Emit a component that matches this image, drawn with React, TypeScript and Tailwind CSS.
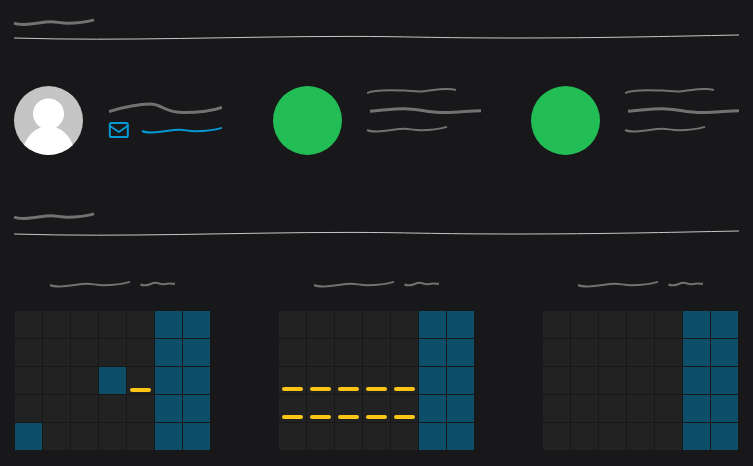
type CellKind = "day" | "off";

const ROWS = [0, 1, 2, 3, 4];
const COLUMNS = [0, 1, 2, 3, 4, 5, 6];

type MonthData = { off: string[]; marked: string[]; markClass: string };

const MONTHS: MonthData[] = [
  { off: ["2-3", "4-0"], marked: ["2-4"], markClass: "pb-[2px]" },
  {
    off: [],
    marked: ["2-0", "2-1", "2-2", "2-3", "2-4", "3-0", "3-1", "3-2", "3-3", "3-4"],
    markClass: "pb-[3px]",
  },
  { off: [], marked: [], markClass: "pb-[3px]" },
];

function Scribble({ width = 2 }: { width?: number }) {
  return (
    <svg className="block h-2 w-20 overflow-visible" viewBox="0 0 80 8" fill="none" stroke="currentColor" strokeWidth={width}>
      <path d="M0 5C3 6.4 8 6.7 14 6.3C22 5.7 30 3.7 37 3.7C43 3.7 46 5.2 54 5.2C64 5.2 73 3.8 80 1.9" />
    </svg>
  );
}

function SectionHeader({ gapClass }: { gapClass: string }) {
  return (
    <header className={`flex flex-col text-[#727272] ${gapClass}`}>
      <Scribble width={3} />
      <svg
        className="block h-2 w-full overflow-visible text-[#c8c8c8]"
        viewBox="0 0 725 8"
        preserveAspectRatio="none"
        fill="none"
        stroke="currentColor"
        strokeWidth="1"
      >
        <path d="M0 4C110 7.4 220 2.4 336 2.4C390 2.4 420 4 500 4C590 4 650 2.4 725 1" />
      </svg>
    </header>
  );
}

function Avatar() {
  return (
    <svg className="block size-[69px] shrink-0" viewBox="0 0 69 69">
      <defs>
        <clipPath id="avatar-clip">
          <circle cx="34.5" cy="34.5" r="34.5" />
        </clipPath>
      </defs>
      <g clipPath="url(#avatar-clip)">
        <rect width="69" height="69" fill="#c5c5c5" />
        <path
          d="M34.5 12.5C25.5 12.5 19 19.5 19 28C19 33.5 22 38 27 41.5C19 44 12 52 9.5 61V69H59.5V61C57 52 50 44 42 41.5C47 38 50 33.5 50 28C50 19.5 43.5 12.5 34.5 12.5Z"
          fill="#fff"
        />
      </g>
    </svg>
  );
}

function MailIcon() {
  return (
    <svg className="block h-4 w-[21px]" viewBox="0 0 21 16" fill="none" stroke="currentColor" strokeWidth="2" strokeLinejoin="round">
      <rect x="1.8" y="1" width="18" height="14" rx="1.6" />
      <path d="M2 4L10.8 10L19.5 4" />
    </svg>
  );
}

function ProfileCard() {
  return (
    <div className="flex gap-[25px]">
      <Avatar />
      <div className="flex w-[114px] flex-col gap-[6px] pt-4">
        <svg className="block h-[14px] w-full text-[#727272]" viewBox="0 0 114 14" fill="none" stroke="currentColor" strokeWidth="3">
          <path d="M1 9.6C16 5 31 2 42 2C55 2 55 10.6 76 10.6C91 10.6 105 8.7 114 5.5" />
        </svg>
        <a href="#mail" className="flex items-center justify-between text-[#0699d6]">
          <MailIcon />
          <Scribble />
        </a>
      </div>
    </div>
  );
}

function StatCard() {
  return (
    <div className="flex gap-[25px]">
      <div className="size-[69px] shrink-0 rounded-full bg-[#22be55]" />
      <div className="flex w-[114px] flex-col pt-px text-[#727272]">
        <svg className="block h-2 w-[89px]" viewBox="0 0 89 8" fill="none" stroke="currentColor" strokeWidth="2">
          <path d="M0 6C8 2 26 3.2 38 3.6C46 4 50 5 57 4.2C65 3.4 70 2 80 2Q86 2 89 3" />
        </svg>
        <svg className="mt-3 block h-2 w-full" viewBox="0 0 114 8" fill="none" stroke="currentColor" strokeWidth="3">
          <path d="M3 4.2C17 3.2 26 1.8 37 1.8C52 1.8 60 5.7 78 5.6C91 5.4 102 4 114 3.7" />
        </svg>
        <div className="mt-[10px]">
          <Scribble />
        </div>
      </div>
    </div>
  );
}

function Cell({ kind, marked, markClass }: { kind: CellKind; marked: boolean; markClass: string }) {
  return (
    <div className={`flex h-[27px] items-end px-[3px] ${markClass} ${kind === "off" ? "bg-[#0d4f69]" : "bg-[#222222]"}`}>
      {marked && <span className="h-1 w-full rounded-[2px] bg-[#fac515]" />}
    </div>
  );
}

function Month({ off, marked, markClass }: MonthData) {
  return (
    <div className="w-[195px]">
      <div className="flex justify-center gap-[10px] text-[#727272]">
        <Scribble />
        <svg className="block h-2 w-[35px] overflow-visible" viewBox="0 0 35 8" fill="none" stroke="currentColor" strokeWidth="2">
          <path d="M0.5 4.5C7 7.5 10 2.8 16 2.8C19 2.8 20 5 25 4C29 3 32 3.8 35 3.8" />
        </svg>
      </div>
      <div className="mt-[23px] grid grid-cols-7 gap-px bg-[#171718]">
        {ROWS.flatMap((row) =>
          COLUMNS.map((column) => {
            const key = `${row}-${column}`;
            return (
              <Cell
                key={key}
                kind={column > 4 || off.includes(key) ? "off" : "day"}
                marked={marked.includes(key)}
                markClass={markClass}
              />
            );
          })
        )}
      </div>
    </div>
  );
}

export default function App() {
  return (
    <main className="min-h-screen bg-[#18181a] px-[14px] pt-[18px] pb-4 font-['Liberation_Sans',sans-serif]">
      <section>
        <SectionHeader gapClass="gap-2" />
        <div className="mt-11 flex justify-between">
          <ProfileCard />
          <StatCard />
          <StatCard />
        </div>
      </section>
      <section className="mt-[57px]">
        <SectionHeader gapClass="gap-[10px]" />
        <div className="mt-[42px] flex justify-between px-px">
          {MONTHS.map((month, index) => (
            <Month key={index} {...month} />
          ))}
        </div>
      </section>
    </main>
  );
}
